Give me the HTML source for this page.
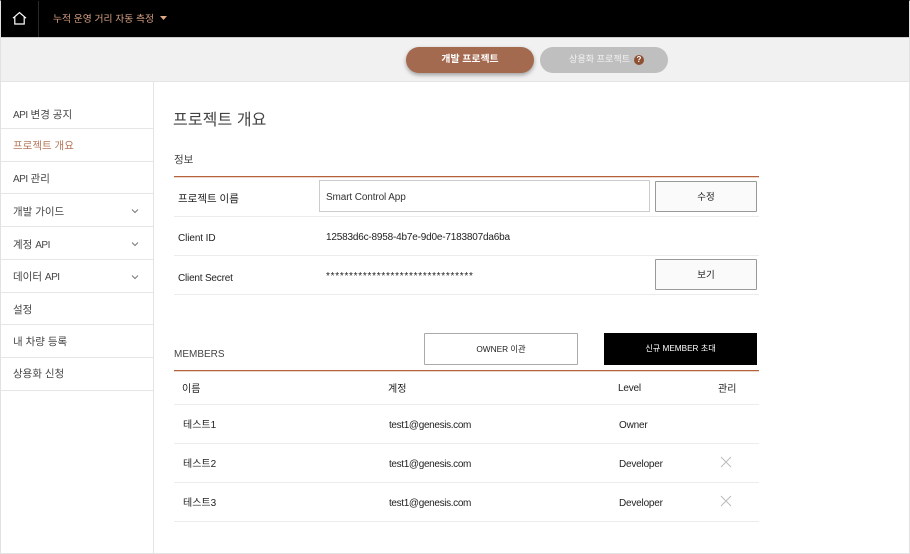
<!DOCTYPE html>
<html lang="ko"><head><meta charset="utf-8">
<style>
*{box-sizing:border-box;margin:0;padding:0}
html,body{width:910px;height:554px;overflow:hidden;background:#fff}
body{position:relative;font-family:"Liberation Sans","Noto Sans CJK KR",sans-serif;color:#222;font-size:10px}
.a{position:absolute;white-space:nowrap;line-height:14px}
.t{letter-spacing:-.35px}
.l{position:absolute;height:1px}
.k{font-size:10px}
.nav{left:13px;color:#444;font-size:10.5px}
.nav span{font-size:10px;letter-spacing:-.5px}
.btn{position:absolute;background:#fafafa;border:1px solid #999;border-radius:1px;text-align:center;font-size:9.5px;line-height:31px;color:#222}
.o{position:absolute;left:174px;width:585px;height:1px;background:#b5623c;box-shadow:0 1px 0 #ead6cb}
.r{position:absolute;left:174px;width:585px;height:1px;background:#ececec}
</style></head><body>
<div style="position:absolute;left:1px;top:1px;width:909px;height:36px;background:#000"></div>
<div style="position:absolute;left:1px;top:37px;width:908px;height:45px;background:#f1f1f1;border-top:1px solid #ccc;border-bottom:1px solid #e4e4e4"></div>
<div style="position:absolute;left:0;top:0;width:910px;height:554px;border:1px solid #e2e2e2;border-top:1px solid #000;pointer-events:none"></div>
<div style="position:absolute;left:38px;top:1px;width:1px;height:36px;background:#2a2a2a"></div>
<svg style="position:absolute;left:12px;top:11px" width="15" height="15" viewBox="0 0 15 15" fill="none" stroke="#fff" stroke-width="1.2"><path d="M1 7.2 7.5 1.5 14 7.2M2.8 6V13H12.2V6"/></svg>
<div class="a" style="left:53px;top:13px;color:#d9a283;font-size:9.8px">누적 운영 거리 자동 측정</div>
<svg style="position:absolute;left:160px;top:16px" width="7" height="5"><path d="M0 0H7L3.5 4Z" fill="#e0a988"/></svg>

<div style="position:absolute;left:406px;top:47px;width:128px;height:26px;border-radius:13px;background:#a46a4f;box-shadow:0 2px 4px rgba(0,0,0,.35);color:#fff;text-align:center;line-height:26px;font-size:9.9px;font-weight:bold">개발 프로젝트</div>
<div style="position:absolute;left:540px;top:47px;width:128px;height:26px;border-radius:13px;background:#bfbfbf;color:#f2f2f2;line-height:25px;font-size:9.1px;padding-left:29px">상용화 프로젝트</div>
<div style="position:absolute;left:634px;top:55px;width:10px;height:10px;border-radius:50%;background:#8f4f31;color:#fff;font-size:8px;font-weight:bold;line-height:10px;text-align:center">?</div>

<div style="position:absolute;left:153px;top:82px;width:1px;height:471px;background:#e4e4e4"></div>
<div class="a nav" style="top:108px"><span>API</span> 변경 공지</div>
<div class="a nav" style="top:139px;color:#b5775a">프로젝트 개요</div>
<div class="a nav" style="top:172px"><span>API</span> 관리</div>
<div class="a nav" style="top:205px">개발 가이드</div>
<div class="a nav" style="top:238px">계정 <span>API</span></div>
<div class="a nav" style="top:270px">데이터 <span>API</span></div>
<div class="a nav" style="top:303px">설정</div>
<div class="a nav" style="top:335px">내 차량 등록</div>
<div class="a nav" style="top:367px">상용화 신청</div>
<div class="l" style="left:1px;top:128px;width:152px;background:#e6e6e6"></div>
<div class="l" style="left:1px;top:161px;width:152px;background:#e6e6e6"></div>
<div class="l" style="left:1px;top:193px;width:152px;background:#e6e6e6"></div>
<div class="l" style="left:1px;top:226px;width:152px;background:#e6e6e6"></div>
<div class="l" style="left:1px;top:259px;width:152px;background:#e6e6e6"></div>
<div class="l" style="left:1px;top:292px;width:152px;background:#e6e6e6"></div>
<div class="l" style="left:1px;top:324px;width:152px;background:#e6e6e6"></div>
<div class="l" style="left:1px;top:357px;width:152px;background:#e6e6e6"></div>
<div class="l" style="left:1px;top:390px;width:152px;background:#e6e6e6"></div>
<svg style="position:absolute;left:131px;top:209px" width="8" height="5" fill="none" stroke="#777"><path d="M1 .5 4 3.5 7 .5"/></svg>
<svg style="position:absolute;left:131px;top:242px" width="8" height="5" fill="none" stroke="#777"><path d="M1 .5 4 3.5 7 .5"/></svg>
<svg style="position:absolute;left:131px;top:275px" width="8" height="5" fill="none" stroke="#777"><path d="M1 .5 4 3.5 7 .5"/></svg>

<div class="a" style="left:173px;top:111px;font-size:16px;line-height:20px;color:#444;letter-spacing:.1px">프로젝트 개요</div>
<div class="a k" style="left:174px;top:153px;color:#444;font-size:10.5px">정보</div>
<div class="o" style="top:176px"></div>
<div class="a" style="left:178px;top:192px;font-size:10.5px">프로젝트 이름</div>
<div style="position:absolute;left:319px;top:180px;width:331px;height:32px;border:1px solid #ccc;font-size:10px;letter-spacing:-.12px;line-height:34px;padding-left:6px;color:#333">Smart Control App</div>
<div class="btn" style="left:655px;top:181px;width:102px;height:31px">수정</div>
<div class="r" style="top:216px"></div>
<div class="a" style="left:178px;top:232px;font-size:10px;letter-spacing:-.1px">Client ID</div>
<div class="a" style="left:326px;top:231px;font-size:10px;letter-spacing:-.19px">12583d6c-8958-4b7e-9d0e-7183807da6ba</div>
<div class="r" style="top:255px"></div>
<div class="a" style="left:178px;top:272px;font-size:10px;letter-spacing:-.2px">Client Secret</div>
<div class="a" style="left:326px;top:270px;font-size:10px;letter-spacing:.72px">********************************</div>
<div class="btn" style="left:655px;top:259px;width:102px;height:31px">보기</div>
<div class="r" style="top:294px"></div>

<div class="a" style="left:174px;top:348px;color:#444;font-size:10px">MEMBERS</div>
<div class="btn" style="left:424px;top:333px;width:154px;height:32px;font-size:8.3px;background:#fff;line-height:30px;border-color:#aaa">OWNER 이관</div>
<div style="position:absolute;left:604px;top:333px;width:153px;height:32px;background:#000;color:#fff;text-align:center;line-height:32px;font-size:8.2px">신규 MEMBER 초대</div>
<div class="o" style="top:370px"></div>
<div class="a k" style="left:182px;top:383px">이름</div>
<div class="a k" style="left:388px;top:383px">계정</div>
<div class="a" style="left:618px;top:382px;letter-spacing:-.2px">Level</div>
<div class="a k" style="left:718px;top:383px">관리</div>
<div class="r" style="top:404px"></div>
<div class="a k" style="left:183px;top:419px">테스트1</div>
<div class="a t" style="left:389px;top:419px">test1@genesis.com</div>
<div class="a" style="left:619px;top:419px;letter-spacing:-.2px">Owner</div>
<div class="r" style="top:443px"></div>
<div class="a k" style="left:183px;top:458px">테스트2</div>
<div class="a t" style="left:389px;top:458px">test1@genesis.com</div>
<div class="a" style="left:619px;top:458px;letter-spacing:-.2px">Developer</div>
<svg style="position:absolute;left:720px;top:456px" width="12" height="12" fill="none" stroke="#bbb"><path d="M1 1 11 11M11 1 1 11"/></svg>
<div class="r" style="top:482px"></div>
<div class="a k" style="left:183px;top:497px">테스트3</div>
<div class="a t" style="left:389px;top:497px">test1@genesis.com</div>
<div class="a" style="left:619px;top:497px;letter-spacing:-.2px">Developer</div>
<svg style="position:absolute;left:720px;top:495px" width="12" height="12" fill="none" stroke="#bbb"><path d="M1 1 11 11M11 1 1 11"/></svg>
<div class="r" style="top:521px"></div>
</body></html>
